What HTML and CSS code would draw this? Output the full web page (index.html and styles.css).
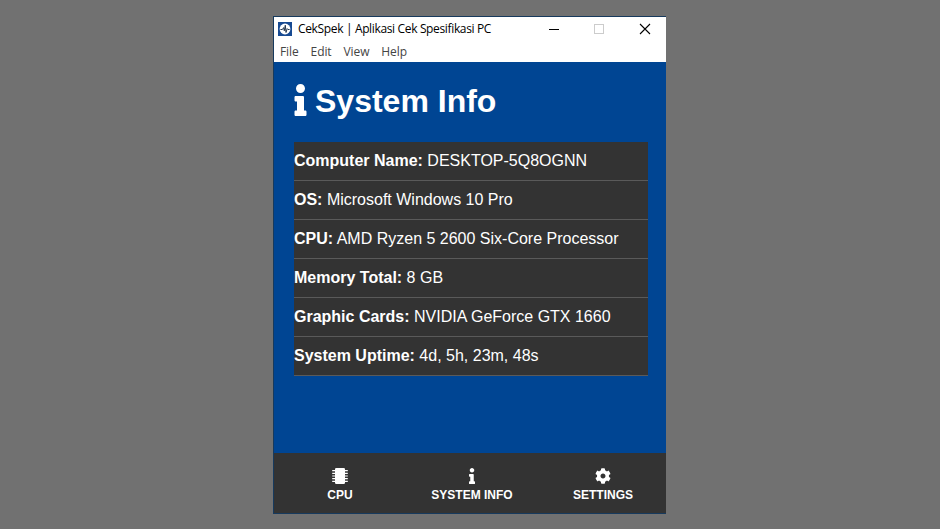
FILE: index.html
```html
<!DOCTYPE html>
<html lang="id">
<head>
<meta charset="utf-8">
<title>CekSpek</title>
<link rel="stylesheet" href="styles.css">
</head>
<body>
<svg class="defs" aria-hidden="true">
  <symbol id="info" viewBox="0 0 192 512"><path d="M20 424.229h20V279.771H20c-11.046 0-20-8.954-20-20V212c0-11.046 8.954-20 20-20h112c11.046 0 20 8.954 20 20v212.229h20c11.046 0 20 8.954 20 20V492c0 11.046-8.954 20-20 20H20c-11.046 0-20-8.954-20-20v-47.771c0-11.046 8.954-20 20-20zM96 0C56.235 0 24 32.235 24 72s32.235 72 72 72 72-32.235 72-72S135.764 0 96 0z"/></symbol>
</svg>
<main class="window">
  <header class="titlebar">
    <svg class="logo" viewBox="0 0 14 14"><rect width="14" height="14" fill="#174a92"/><circle cx="7" cy="7" r="5.4" fill="#fff"/><path d="M2.4 7.5h2L5.6 5.6 6.3 8.8 7.3 3.2 8 10.5 9.2 6.6 10 7.5H11.6" fill="none" stroke="#26384f"/></svg>
    <span class="title">CekSpek | Aplikasi Cek Spesifikasi PC</span>
    <div class="controls">
      <svg viewBox="0 0 10 10"><path d="M0 5.5h10" stroke="#000"/></svg>
      <svg viewBox="0 0 10 10"><rect x=".5" y=".5" width="9" height="9" stroke="#ccc" fill="none"/></svg>
      <svg viewBox="0 0 10 10"><path d="M0 0l10 10M10 0L0 10" stroke="#000" stroke-width="1.1"/></svg>
    </div>
  </header>
  <nav class="menu"><span>File</span><span>Edit</span><span>View</span><span>Help</span></nav>
  <section class="content">
    <h1><svg class="h-icon"><use href="#info"/></svg>System Info</h1>
    <ul class="specs">
      <li><strong>Computer Name:</strong> DESKTOP-5Q8OGNN</li>
      <li><strong>OS:</strong> Microsoft Windows 10 Pro</li>
      <li><strong>CPU:</strong> AMD Ryzen 5 2600 Six-Core Processor</li>
      <li><strong>Memory Total:</strong> 8 GB</li>
      <li><strong>Graphic Cards:</strong> NVIDIA GeForce GTX 1660</li>
      <li><strong>System Uptime:</strong> 4d, 5h, 23m, 48s</li>
    </ul>
  </section>
  <nav class="tabs">
    <div class="tab">
      <svg viewBox="0 0 18 16"><rect x="4" width="10" height="16" rx="1.3"/><path d="M1.2 2.6h15.6M1.2 5.3h15.6M1.2 8h15.6M1.2 10.7h15.6M1.2 13.4h15.6" stroke="#fff" stroke-width="1.2"/></svg>
      <span>CPU</span>
    </div>
    <div class="tab"><svg><use href="#info"/></svg><span>SYSTEM INFO</span></div>
    <div class="tab">
      <svg viewBox="0 0 512 512"><path d="M487.4 315.7l-42.6-24.6c4.3-23.2 4.3-47 0-70.2l42.6-24.6c4.9-2.8 7.1-8.6 5.5-14-11.1-35.6-30-67.8-54.7-94.6-3.8-4.1-10-5.1-14.8-2.3L380.8 110c-17.9-15.4-38.5-27.3-60.8-35.1V25.8c0-5.6-3.9-10.5-9.4-11.7-36.7-8.2-74.3-7.8-109.2 0-5.5 1.2-9.4 6.1-9.4 11.7V75c-22.2 7.9-42.8 19.8-60.8 35.1L88.7 85.5c-4.9-2.8-11-1.9-14.8 2.3-24.7 26.7-43.6 58.9-54.7 94.6-1.7 5.4.6 11.2 5.5 14L67.3 221c-4.3 23.2-4.3 47 0 70.2l-42.6 24.6c-4.9 2.8-7.1 8.6-5.5 14 11.1 35.6 30 67.8 54.7 94.6 3.8 4.1 10 5.1 14.8 2.3l42.6-24.6c17.9 15.4 38.5 27.3 60.8 35.1v49.2c0 5.6 3.9 10.5 9.4 11.7 36.7 8.2 74.3 7.8 109.2 0 5.5-1.2 9.4-6.1 9.4-11.7v-49.2c22.2-7.9 42.8-19.8 60.8-35.1l42.6 24.6c4.9 2.8 11 1.9 14.8-2.3 24.7-26.7 43.6-58.9 54.7-94.6 1.5-5.5-.7-11.3-5.6-14.1zM256 336c-44.1 0-80-35.9-80-80s35.9-80 80-80 80 35.9 80 80-35.9 80-80 80z"/></svg>
      <span>SETTINGS</span>
    </div>
  </nav>
</main>
</body>
</html>
```
FILE: styles.css
```css
* { box-sizing: border-box; }
body {
  margin: 0;
  height: 529px;
  padding: 16px 0 0 273px;
  background: #717171;
  font: 16px/20px "Liberation Sans", Arial, sans-serif;
  color: #fff;
  overflow: hidden;
}
.defs { display: none; }
.window {
  width: 393px;
  height: 498px;
  border: 1px solid #173a5d;
  border-right: 0;
  display: flex;
  flex-direction: column;
}
.titlebar {
  height: 25px;
  background: #fff;
  color: #000;
  display: flex;
  align-items: center;
  padding: 0 0 2px 4px;
  font: 12px/16px "Open Sans", "Noto Sans", sans-serif;
}
.logo { width: 14px; height: 14px; margin-right: 6px; }
.title { letter-spacing: -0.35px; white-space: nowrap; }
.controls { margin-left: auto; display: flex; gap: 36px; padding-right: 16px; }
.controls svg { width: 10px; height: 10px; display: block; overflow: visible; }
.controls svg:first-child { margin-right: -1px; }
.menu {
  height: 20px;
  background: #fff;
  color: #444;
  display: flex;
  gap: 12px;
  padding-left: 6px;
  letter-spacing: -0.1px;
  font: 12px/20px "Open Sans", "Noto Sans", sans-serif;
}
.content {
  height: 391px;
  background: #004593;
  padding: 20px 18px 0 20px;
}
h1 {
  margin: 0 0 22px;
  font-size: 32px;
  line-height: 38px;
  display: flex;
  align-items: center;
  gap: 9px;
}
.h-icon { width: 13px; height: 32px; margin: 0 -1px 2px 0; fill: #fff; }
.specs { list-style: none; margin: 0; padding: 0; background: #333; }
.specs li { height: 39px; line-height: 38px; border-bottom: 1px solid #5a5a5a; white-space: nowrap; }
.tabs {
  flex: 1;
  background: #333;
  display: grid;
  grid-template-columns: 132px 132px 1fr;
  padding-top: 15px;
}
.tab { display: flex; flex-direction: column; align-items: center; font: bold 12px/14px "Liberation Sans", Arial, sans-serif; }
.tab:last-child { padding-left: 2px; }
.tab svg { width: 18px; height: 16px; fill: #fff; margin-bottom: 4px; }
```
